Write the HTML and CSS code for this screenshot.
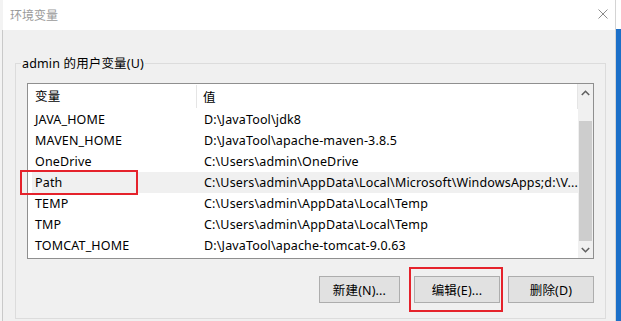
FILE: index.html
```html
<!DOCTYPE html>
<html lang="zh-CN">
<head>
<meta charset="utf-8">
<title>环境变量</title>
<link rel="stylesheet" href="styles.css">
</head>
<body>
<div class="screen">
  <div class="edge-left"><div class="edge-line"></div></div>
  <div class="window">
    <div class="titlebar">
      <span class="title">环境变量</span>
      <svg class="close" width="10" height="10" viewBox="0 0 10 10"><path d="M0.5 0.5 L9.5 9.5 M9.5 0.5 L0.5 9.5" stroke="#8c8c8c" stroke-width="1" fill="none"/></svg>
    </div>
    <div class="content">
      <fieldset class="group">
        <legend>admin 的用户变量(U)</legend>
        <div class="listbox">
          <div class="list">
            <div class="header">
              <div class="h1">变量</div>
              <div class="h2">值</div>
            </div>
            <div class="row"><div class="c1">JAVA_HOME</div><div class="c2">D:\JavaTool\jdk8</div></div>
            <div class="row"><div class="c1">MAVEN_HOME</div><div class="c2">D:\JavaTool\apache-maven-3.8.5</div></div>
            <div class="row"><div class="c1">OneDrive</div><div class="c2">C:\Users\admin\OneDrive</div></div>
            <div class="row selected"><div class="c1">Path</div><div class="c2">C:\Users\admin\AppData\Local\Microsoft\WindowsApps;d:\V...</div><span class="redbox path-mark"></span></div>
            <div class="row"><div class="c1">TEMP</div><div class="c2">C:\Users\admin\AppData\Local\Temp</div></div>
            <div class="row"><div class="c1">TMP</div><div class="c2">C:\Users\admin\AppData\Local\Temp</div></div>
            <div class="row"><div class="c1">TOMCAT_HOME</div><div class="c2">D:\JavaTool\apache-tomcat-9.0.63</div></div>
          </div>
          <div class="scrollbar">
            <div class="sb-btn"><svg width="9" height="6" viewBox="0 0 9 6"><path d="M0.8 5 L4.5 1.3 L8.2 5" stroke="#606060" stroke-width="1.6" fill="none"/></svg></div>
            <div class="sb-track"><div class="thumb"></div></div>
            <div class="sb-btn"><svg width="9" height="6" viewBox="0 0 9 6"><path d="M0.8 1 L4.5 4.7 L8.2 1" stroke="#606060" stroke-width="1.6" fill="none"/></svg></div>
          </div>
        </div>
        <div class="buttons">
          <button class="btn btn-new">新建(N)...</button>
          <div class="mark-wrap">
            <button class="btn">编辑(E)...</button>
            <span class="redbox edit-mark"></span>
          </div>
          <button class="btn">删除(D)</button>
        </div>
      </fieldset>
    </div>
  </div>
  <div class="edge-right"></div>
</div>
</body>
</html>
```

FILE: styles.css
```css
* { box-sizing: border-box; }

html, body {
  margin: 0;
  padding: 0;
  width: 621px;
  height: 321px;
  overflow: hidden;
  background: #f0f0f0;
}

body {
  font-family: "Noto Sans", "Noto Sans CJK SC", sans-serif;
  font-size: 12.5px;
  letter-spacing: 0.15px;
  color: #000;
}

.screen {
  display: flex;
  width: 621px;
  height: 321px;
}

.edge-left {
  width: 3px;
  background: #f3f3f3;
  display: flex;
  justify-content: flex-end;
}
.edge-line {
  width: 1px;
  margin-top: 30px;
  background: #c9c9c9;
}

.window {
  width: 613px;
  height: 321px;
  border-right: 1px solid #d4d4d4;
  display: flex;
  flex-direction: column;
  background: #f0f0f0;
}

.edge-right {
  width: 5px;
  background: linear-gradient(to bottom, #ffffff 0 29px, #1b6fc8 29px);
}

.titlebar {
  height: 30px;
  background: #fff;
  display: flex;
  align-items: center;
  justify-content: space-between;
  padding: 0 7px 2px 7px;
}
.title {
  color: #9a9a9a;
  font-family: "Noto Sans CJK SC", sans-serif;
  font-size: 12px;
  letter-spacing: 0;
}
.close { display: block; margin-top: 0; }

.content {
  flex: 1;
  padding: 25px 0 0 12px;
}

.group {
  margin: 0;
  width: 591px;
  height: 264px;
  border: 1px solid #dcdcdc;
  padding: 11px 11px 0 11px;
}
.group legend {
  margin-left: -6px;
  padding: 0 1px;
  line-height: 17px;
}

.listbox {
  width: 567px;
  height: 176px;
  border: 1px solid #8f8f8f;
  background: #fff;
  display: flex;
}

.list {
  flex: 1;
  display: flex;
  flex-direction: column;
}

.header {
  height: 25px;
  display: flex;
  align-items: center;
  border-right: 1px solid #e5e5e5;
}
.h1 {
  width: 169px;
  padding-left: 7px;
  height: 23px;
  line-height: 23px;
  border-right: 1px solid #e5e5e5;
}
.h2 {
  padding-left: 6px;
}

.row {
  position: relative;
  height: 21px;
  display: flex;
  align-items: center;
  margin-left: 4px;
  white-space: nowrap;
}
.row.selected { background: #f0f0f0; }
.c1 { width: 165px; padding-left: 3px; }
.c2 { padding-left: 7px; }

.scrollbar {
  width: 17px;
  background: #f0f0f0;
  display: flex;
  flex-direction: column;
}
.sb-btn {
  height: 17px;
  display: flex;
  align-items: center;
  justify-content: center;
}
.sb-btn svg { display: block; }
.sb-track {
  flex: 1;
  display: flex;
  flex-direction: column;
  justify-content: flex-end;
  padding: 0 1px;
}
.thumb {
  height: 120px;
  background: #cdcdcd;
}

.buttons {
  display: flex;
  justify-content: flex-end;
  gap: 8px;
  margin-top: 17px;
}
.btn {
  width: 86px;
  height: 27px;
  background: #e1e1e1;
  border: 1px solid #adadad;
  font-family: "Noto Sans", "Noto Sans CJK SC", sans-serif;
  font-size: 12.5px;
  letter-spacing: 0.15px;
  color: #000;
  padding: 0;
  margin: 0;
}
.btn-new { width: 81px; margin-right: 6px; }

.mark-wrap { position: relative; display: flex; }

.redbox {
  position: absolute;
  border: 2px solid #e5222b;
  pointer-events: none;
}
.path-mark {
  left: -12px;
  top: -2px;
  width: 118px;
  height: 25px;
}
.edit-mark {
  left: -5px;
  top: -9px;
  width: 94px;
  height: 45px;
}
```
